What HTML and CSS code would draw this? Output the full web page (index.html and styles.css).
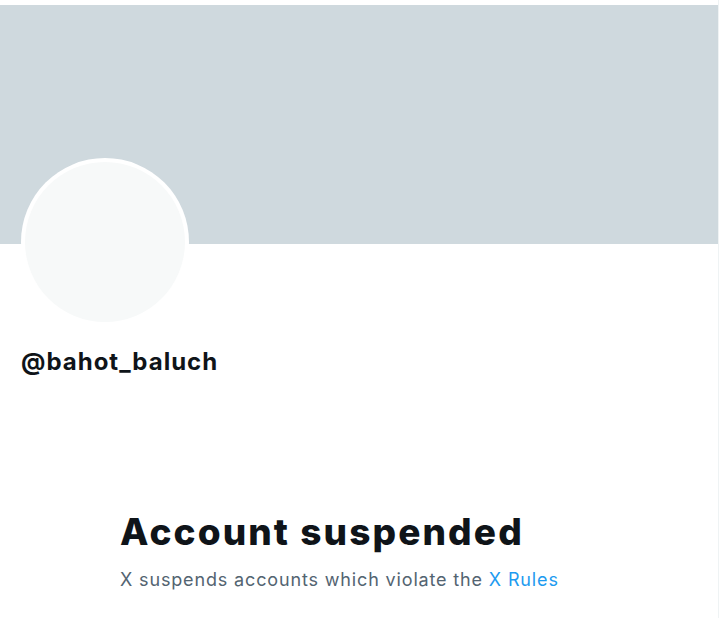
FILE: index.html
```html
<!DOCTYPE html>
<html>
<head>
<meta charset="utf-8">
<link rel="stylesheet" href="styles.css">
</head>
<body>
<main class="column">
  <div class="banner"></div>
  <div class="profile">
    <div class="avatar"><div class="avatar-inner"></div></div>
    <div class="handle">@bahot_baluch</div>
  </div>
  <section class="empty">
    <h1 class="title">Account suspended</h1>
    <p class="sub">X suspends accounts which violate the <a class="link" href="#">X Rules</a></p>
  </section>
</main>
</body>
</html>
```
FILE: styles.css
```css
html, body {
  margin: 0;
  padding: 0;
  background: #ffffff;
}
body {
  font-family: "Inter", "Open Sans", sans-serif;
  color: #0f1419;
}
.column {
  width: 718px;
  border-right: 1px solid #eff3f4;
  padding-top: 5px;
  min-height: 613px;
}
.banner {
  height: 239px;
  background: #cfd9de;
}
.profile {
  padding-left: 21px;
}
.avatar {
  width: 168px;
  height: 168px;
  margin-top: -86px;
  border-radius: 50%;
  background: #ffffff;
  padding: 4px;
  box-sizing: border-box;
}
.avatar-inner {
  width: 100%;
  height: 100%;
  border-radius: 50%;
  background: #f7f9f9;
}
.handle {
  margin-top: 20px;
  font-size: 24px;
  font-weight: 700;
  line-height: 32px;
  letter-spacing: 1px;
}
.empty {
  width: 480px;
  margin: 132px auto 0;
  padding-left: 2px;
}
.title {
  margin: 0;
  font-size: 37px;
  font-weight: 800;
  line-height: 44px;
  letter-spacing: 2.1px;
}
.sub {
  margin: 14px 0 0;
  font-size: 18px;
  line-height: 24px;
  color: #536471;
  letter-spacing: 0.85px;
}
.link {
  color: #1d9bf0;
  text-decoration: none;
}
```
